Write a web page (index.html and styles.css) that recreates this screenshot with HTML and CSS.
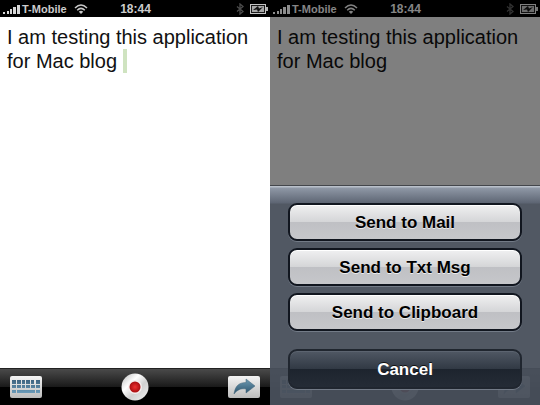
FILE: index.html
```html
<!DOCTYPE html>
<html lang="en">
<head>
  <meta charset="UTF-8" />
  <meta name="viewport" content="width=device-width, initial-scale=1.0" />
  <title>Notes</title>
  <link rel="stylesheet" href="styles.css">
</head>
<body>
  <!-- shared icons -->
  <svg class="sprite" aria-hidden="true">
    <defs>
      <linearGradient id="plate" x1="0" y1="0" x2="0" y2="1">
        <stop offset="0" stop-color="#f4f4f4" />
        <stop offset="1" stop-color="#bcbcbc" />
      </linearGradient>
      <linearGradient id="arrowFill" x1="0" y1="0" x2="0" y2="1">
        <stop offset="0" stop-color="#6f9bb3" />
        <stop offset="1" stop-color="#2b536d" />
      </linearGradient>
      <linearGradient id="keyFill" x1="0" y1="0" x2="0" y2="1">
        <stop offset="0" stop-color="#3f6480" />
        <stop offset="1" stop-color="#6a9ab8" />
      </linearGradient>
      <radialGradient id="dotFill" cx="0.5" cy="0.5" r="0.5">
        <stop offset="0" stop-color="#ee3030" />
        <stop offset="1" stop-color="#a80c10" />
      </radialGradient>
      <linearGradient id="ringFill" x1="0" y1="0" x2="1" y2="1">
        <stop offset="0" stop-color="#b8b8b8" />
        <stop offset="0.35" stop-color="#ffffff" />
        <stop offset="0.6" stop-color="#d0d0d0" />
        <stop offset="1" stop-color="#f4f4f4" />
      </linearGradient>
    </defs>
    <symbol id="signal" viewBox="0 0 17 10">
      <path d="M0 8h2v2H0zM4 7h2v3H4zM7 5h2v5H7zM10 3h3v7h-3zM14 1h3v9h-3z" fill="#d8d8d8" />
    </symbol>
    <symbol id="wifi" viewBox="0 0 14 10">
      <g fill="none" stroke="#c8c8c8" stroke-width="1.5">
        <path d="M1 4Q7 -2 13 4" />
        <path d="M3.2 6.2Q7 2.6 10.8 6.2" />
      </g>
      <path d="M4.8 7.8Q7 5.8 9.2 7.8L7 10z" fill="#c8c8c8" />
    </symbol>
    <symbol id="bluetooth" viewBox="0 0 8 12">
      <path d="M1 3.5L7 8.5L4 11V1L7 3.5L1 8.5" fill="none" stroke="#4c4c4c" stroke-width="1.3" />
    </symbol>
    <symbol id="battery" viewBox="0 0 18 10">
      <rect x="0.5" y="0.5" width="15" height="9" fill="#1a1a1a" stroke="#c4c4c4" />
      <rect x="2" y="2" width="12" height="6" fill="#a6a6a6" />
      <path d="M16 3h2v4h-2z" fill="#b4b4b4" />
      <path d="M3 6L8 2L9 4.500L13 3L8 8L7 5.500z" fill="#111" />
    </symbol>
    <symbol id="keyboard" viewBox="0 0 32 22">
      <rect width="32" height="22" rx="2" fill="url(#plate)" />
      <path d="M2 4h4v4H2zM7 4h4v4H7zM12 4h3v4h-3zM16 4h4v4h-4zM21 4h3v4h-3zM26 4h4v4h-4zM2 9h4v3H2zM7 9h4v3H7zM12 9h3v3h-3zM16 9h4v3h-4zM21 9h4v3h-4zM26 9h4v3h-4zM2 14h4v3H2zM7 14h18v3H7zM26 14h4v3h-4z" fill="url(#keyFill)" />
    </symbol>
    <symbol id="record" viewBox="0 0 28 28">
      <circle cx="14" cy="14" r="13.500" fill="url(#ringFill)" />
      <circle cx="14" cy="14" r="7" fill="#f6eeee" />
      <circle cx="14" cy="14" r="5.500" fill="url(#dotFill)" />
    </symbol>
    <symbol id="share" viewBox="0 0 32 22">
      <rect width="32" height="22" rx="2" fill="url(#plate)" />
      <path d="M6 18C7 10 11 6.500 18 6.500V3L27 10L18 17V13C13 12 9 14 6 18z" fill="url(#arrowFill)" stroke="#44667b" stroke-width="0.5" />
    </symbol>
  </svg>

  <main class="screens">
    <section class="screen">
      <header class="status">
        <div class="carrier">
          <svg class="signal"><use href="#signal" /></svg>
          <span>T-Mobile</span>
          <svg class="wifi"><use href="#wifi" /></svg>
        </div>
        <time>18:44</time>
        <div class="power">
          <svg class="bluetooth"><use href="#bluetooth" /></svg>
          <svg class="battery"><use href="#battery" /></svg>
        </div>
      </header>
      <div class="editor">
        <textarea class="note" aria-label="Note" spellcheck="false">I am testing this application for Mac blog</textarea>
        <span class="caret"></span>
      </div>
      <footer class="toolbar">
        <button class="tool" aria-label="Keyboard"><svg class="plate"><use href="#keyboard" /></svg></button>
        <button class="tool" aria-label="Record"><svg class="round"><use href="#record" /></svg></button>
        <button class="tool" aria-label="Share"><svg class="plate"><use href="#share" /></svg></button>
      </footer>
    </section>

    <section class="screen">
      <header class="status">
        <div class="carrier">
          <svg class="signal"><use href="#signal" /></svg>
          <span>T-Mobile</span>
          <svg class="wifi"><use href="#wifi" /></svg>
        </div>
        <time>18:44</time>
        <div class="power">
          <svg class="bluetooth"><use href="#bluetooth" /></svg>
          <svg class="battery"><use href="#battery" /></svg>
        </div>
      </header>
      <div class="editor">
        <textarea class="note" aria-label="Note" spellcheck="false">I am testing this application for Mac blog</textarea>
      </div>
      <footer class="toolbar">
        <button class="tool" aria-label="Keyboard"><svg class="plate"><use href="#keyboard" /></svg></button>
        <button class="tool" aria-label="Record"><svg class="round"><use href="#record" /></svg></button>
        <button class="tool" aria-label="Share"><svg class="plate"><use href="#share" /></svg></button>
      </footer>
      <div class="dim"></div>
      <div class="sheet">
        <button class="btn">Send to Mail</button>
        <button class="btn">Send to Txt Msg</button>
        <button class="btn">Send to Clipboard</button>
        <button class="btn cancel">Cancel</button>
      </div>
    </section>
  </main>
</body>
</html>
```
FILE: styles.css
```css
* {
  box-sizing: border-box;
}

body {
  margin: 0;
  font-family: "Liberation Sans", Arial, sans-serif;
  background: #fff;
}

svg {
  display: block;
}

.sprite {
  position: absolute;
  width: 0;
  height: 0;
}

.screens {
  display: grid;
  grid-template-columns: 1fr 1fr;
  min-height: 100vh;
}

.screen {
  position: relative;
  display: flex;
  flex-direction: column;
  background: #fff;
}

/* status bar */
.status {
  display: grid;
  grid-template-columns: 1fr auto 1fr;
  align-items: center;
  height: 17px;
  padding: 0 2px 0 3px;
  background: #000;
  color: #ccc;
  font-size: 12px;
  line-height: 16px;
  font-weight: bold;
}

.carrier,
.power {
  display: flex;
  align-items: center;
}

.carrier {
  gap: 2px;
  font-size: 11px;
}

.power {
  justify-content: flex-end;
  gap: 6px;
}

.signal {
  width: 17px;
  height: 10px;
}

.wifi {
  width: 14px;
  height: 10px;
  margin-left: 5px;
}

.bluetooth {
  width: 8px;
  height: 12px;
}

.battery {
  width: 18px;
  height: 10px;
}

/* note text */
.editor {
  position: relative;
  display: flex;
  flex: 1;
}

.note {
  width: 100%;
  padding: 8px 7px;
  border: 0;
  outline: 0;
  resize: none;
  overflow: hidden;
  background: #fff;
  color: #111;
  font: 20px/24px "Liberation Sans", Arial, sans-serif;
}

.caret {
  position: absolute;
  top: 32px;
  left: 123px;
  width: 4px;
  height: 24px;
  background: #cfe3c0;
}

/* bottom bar */
.toolbar {
  display: flex;
  justify-content: space-between;
  align-items: center;
  height: 37px;
  padding: 0 10px;
  border-top: 1px solid #222;
  background: linear-gradient(#4a4a4a, #191919 50%, #000 51%);
}

.tool {
  padding: 0;
  border: 0;
  background: none;
  cursor: pointer;
}

.plate {
  width: 32px;
  height: 22px;
}

.round {
  width: 28px;
  height: 28px;
}

/* action sheet, the status bar is dimmed less than the note */
.dim {
  position: absolute;
  inset: 0;
  background: linear-gradient(rgba(0, 0, 0, 0.35) 17px, rgba(0, 0, 0, 0.5) 17px);
}

.sheet {
  position: absolute;
  right: 0;
  bottom: 0;
  left: 0;
  display: flex;
  flex-direction: column;
  gap: 7px;
  padding: 17px 18px 16px;
  border-top: 1px solid #44474c;
  background:
    linear-gradient(#b9c0ca 0, #b9c0ca 1px, #8f98a6 2px, #5d6573 17px, transparent 18px),
    rgba(77, 84, 97, 0.9);
}

.btn {
  height: 38px;
  padding: 2px 0 0;
  border: 2px solid #11161f;
  border-radius: 9px;
  background: linear-gradient(#f0f0f1, #d4d5d7 50%, #bfc0c4 51%, #c6c7ca);
  box-shadow: inset 0 1px #fff, 0 1px #737b87;
  color: #000;
  font: bold 17px/20px "Liberation Sans", Arial, sans-serif;
  text-shadow: 0 1px #eee;
  cursor: pointer;
}

.btn.cancel {
  height: 40px;
  margin-top: 11px;
  border-color: #20262f;
  background: linear-gradient(#505864, #313944 50%, #1d242e 51%, #252c36);
  box-shadow: inset 0 1px #5c6470, 0 1px #737b87;
  color: #fff;
  text-shadow: 0 -1px #111;
}
```
